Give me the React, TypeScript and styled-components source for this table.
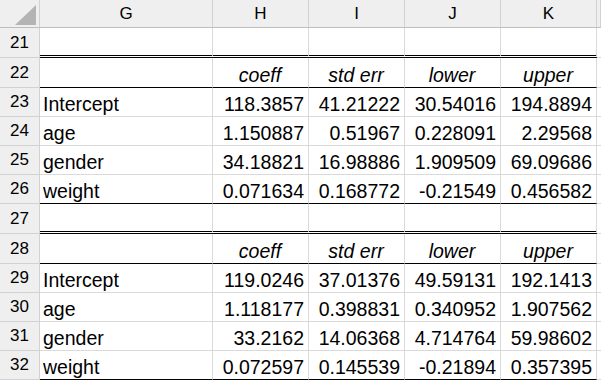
import React from "react";
import styled, { createGlobalStyle } from "styled-components";

const GlobalStyle = createGlobalStyle`
  html, body {
    margin: 0;
    padding: 0;
    background: #fff;
  }
  body {
    font-family: "Liberation Sans", Arial, sans-serif;
    color: #000;
  }
`;

type Edge = "grid" | "single" | "double";
type Align = "left" | "right" | "center";

const Sheet = styled.div`
  display: grid;
  grid-template-columns: 40px 173px 96px 96px 96px 96px 1fr;
  grid-template-rows: 28px 30px 30px 29px 29px 29px 29px 30px 30px 29px 29px 29px 29px;
  width: 601px;
`;

const HeadBase = styled.div`
  box-sizing: border-box;
  background: #efefef;
  border-right: 1px solid #d2d2d2;
  display: flex;
  align-items: flex-end;
  justify-content: center;
  font-size: 17px;
  line-height: 20px;
`;

const Corner = styled(HeadBase)`
  justify-content: flex-end;
  padding: 0 3px 2px 0;
  border-bottom: 1px solid #bdbdbd;
  svg {
    display: block;
  }
`;

const ColHead = styled(HeadBase)`
  padding-bottom: 3px;
  border-bottom: 1px solid #bdbdbd;
`;

const RowHead = styled(HeadBase)`
  padding-bottom: 4px;
  border-bottom: 1px solid #d2d2d2;
`;

const edgeStyle: Record<Edge, string> = {
  grid: "1px solid #dadada",
  single: "1px solid #000",
  double: "3px double #000",
};

const Cell = styled.div<{ $align?: Align; $bottom?: Edge; $italic?: boolean }>`
  box-sizing: border-box;
  display: flex;
  align-items: flex-end;
  justify-content: ${(p) =>
    p.$align === "right" ? "flex-end" : p.$align === "center" ? "center" : "flex-start"};
  padding: 0 4px 1px 3px;
  border-right: 1px solid #dadada;
  border-bottom: ${(p) => edgeStyle[p.$bottom ?? "grid"]};
  font-size: 19.5px;
  line-height: 22px;
  font-style: ${(p) => (p.$italic ? "italic" : "normal")};
  white-space: nowrap;
  overflow: hidden;
`;

const Spare = styled.div`
  box-sizing: border-box;
  border-bottom: 1px solid #dadada;
`;

const letters = ["G", "H", "I", "J", "K"];
const heads = ["coeff", "std err", "lower", "upper"];

const tables: [string, string, string, string, string][][] = [
  [
    ["Intercept", "118.3857", "41.21222", "30.54016", "194.8894"],
    ["age", "1.150887", "0.51967", "0.228091", "2.29568"],
    ["gender", "34.18821", "16.98886", "1.909509", "69.09686"],
    ["weight", "0.071634", "0.168772", "-0.21549", "0.456582"],
  ],
  [
    ["Intercept", "119.0246", "37.01376", "49.59131", "192.1413"],
    ["age", "1.118177", "0.398831", "0.340952", "1.907562"],
    ["gender", "33.2162", "14.06368", "4.714764", "59.98602"],
    ["weight", "0.072597", "0.145539", "-0.21894", "0.357395"],
  ],
];

function BlankRow({ num, bottom }: { num: number; bottom: Edge }) {
  return (
    <>
      <RowHead>{num}</RowHead>
      {letters.map((l) => (
        <Cell key={l} $bottom={bottom} />
      ))}
      <Spare />
    </>
  );
}

function HeaderRow({ num }: { num: number }) {
  return (
    <>
      <RowHead>{num}</RowHead>
      <Cell $bottom="single" />
      {heads.map((h) => (
        <Cell key={h} $align="center" $italic $bottom="single">
          {h}
        </Cell>
      ))}
      <Spare />
    </>
  );
}

function Block({ start, rows }: { start: number; rows: string[][] }) {
  return (
    <>
      <BlankRow num={start} bottom="double" />
      <HeaderRow num={start + 1} />
      {rows.map((r, i) => {
        const edge: Edge = i === rows.length - 1 ? "single" : "grid";
        return (
          <React.Fragment key={r[0]}>
            <RowHead>{start + 2 + i}</RowHead>
            <Cell $bottom={edge}>{r[0]}</Cell>
            {r.slice(1).map((v, j) => (
              <Cell key={j} $align="right" $bottom={edge}>
                {v}
              </Cell>
            ))}
            <Spare />
          </React.Fragment>
        );
      })}
    </>
  );
}

export default function App() {
  return (
    <>
      <GlobalStyle />
      <Sheet>
        <Corner>
          <svg width="21" height="20" viewBox="0 0 21 20">
            <polygon points="21,0 21,20 0,20" fill="#b4b4b4" />
          </svg>
        </Corner>
        {letters.map((l) => (
          <ColHead key={l}>{l}</ColHead>
        ))}
        <ColHead />
        <Block start={21} rows={tables[0]} />
        <Block start={27} rows={tables[1]} />
      </Sheet>
    </>
  );
}
